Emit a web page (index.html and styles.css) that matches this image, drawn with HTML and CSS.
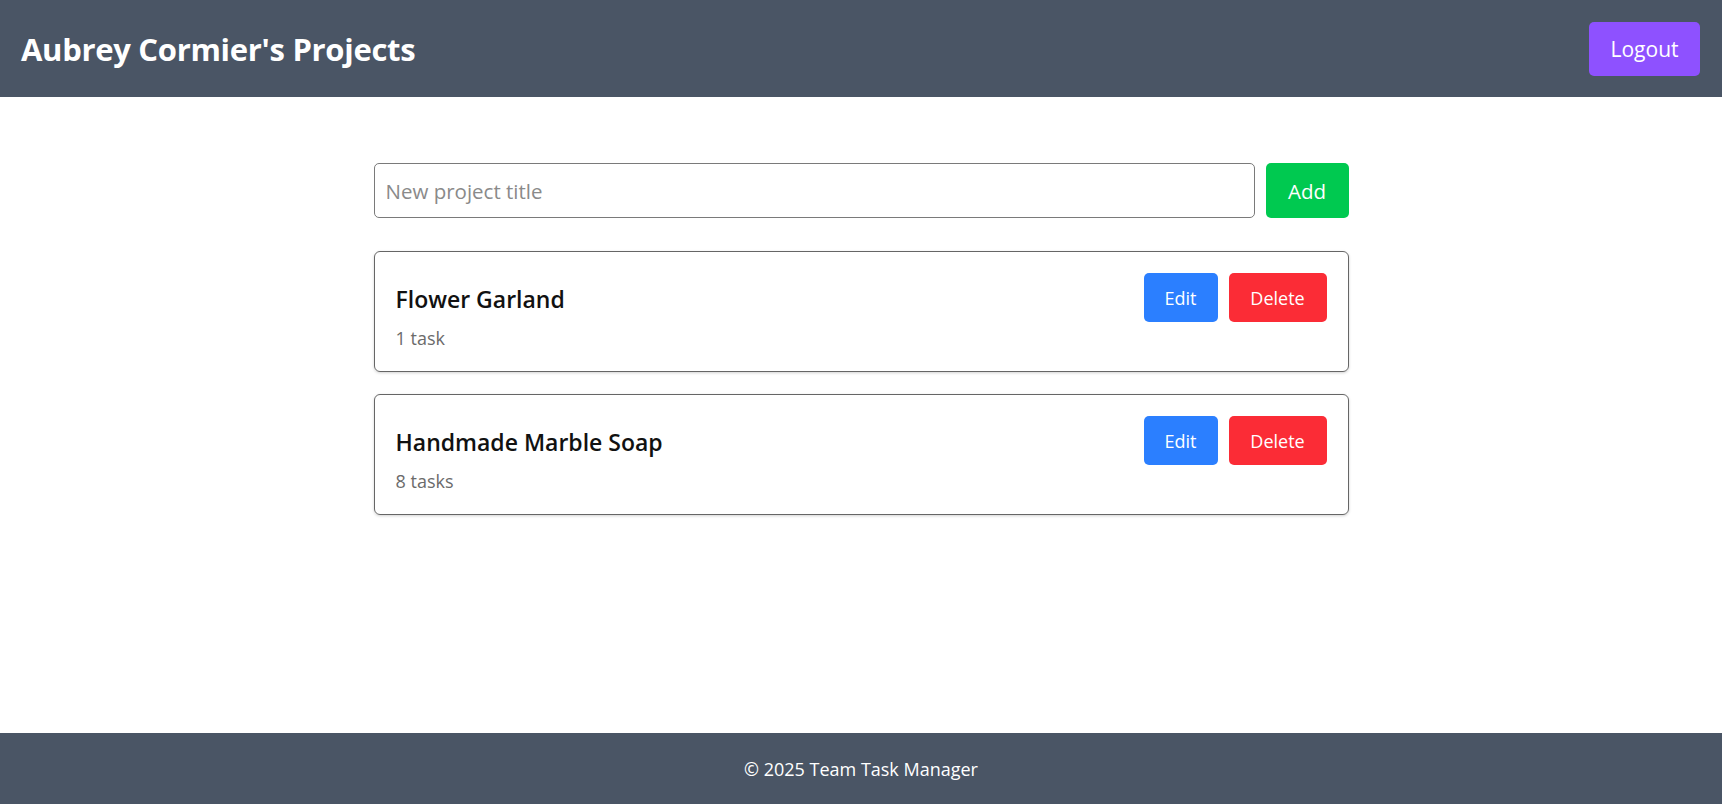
FILE: index.html
```html
<!DOCTYPE html>
<html lang="en">
<head>
<meta charset="utf-8">
<title>Projects</title>
<link rel="stylesheet" href="styles.css">
</head>
<body>
<div class="page">
  <header class="topbar">
    <h1 class="title">Aubrey Cormier's Projects</h1>
    <button class="btn btn-logout">Logout</button>
  </header>
  <main class="main">
    <div class="container">
      <form class="add-row">
        <input class="add-input" type="text" placeholder="New project title">
        <button type="button" class="btn btn-add">Add</button>
      </form>
      <ul class="list">
        <li class="card">
          <div class="card-info">
            <h2 class="card-title">Flower Garland</h2>
            <p class="card-meta">1 task</p>
          </div>
          <div class="card-actions">
            <button class="btn btn-edit">Edit</button>
            <button class="btn btn-delete">Delete</button>
          </div>
        </li>
        <li class="card">
          <div class="card-info">
            <h2 class="card-title">Handmade Marble Soap</h2>
            <p class="card-meta">8 tasks</p>
          </div>
          <div class="card-actions">
            <button class="btn btn-edit">Edit</button>
            <button class="btn btn-delete">Delete</button>
          </div>
        </li>
      </ul>
    </div>
  </main>
  <footer class="footer">© 2025 Team Task Manager</footer>
</div>
</body>
</html>
```

FILE: styles.css
```css
* { box-sizing: border-box; }
html, body { margin: 0; padding: 0; height: 100%; }
body {
  font-family: "Open Sans", "Noto Sans", sans-serif;
  color: #111;
  background: #fff;
}
.page {
  min-height: 100vh;
  display: flex;
  flex-direction: column;
}
.topbar {
  height: 97px;
  background: #4a5565;
  display: flex;
  align-items: center;
  justify-content: space-between;
  padding: 0 22px 0 21px;
}
.title {
  margin: 0;
  color: #fff;
  font-size: 31px;
  font-weight: 700;
  letter-spacing: -0.3px;
}
.btn {
  border: none;
  border-radius: 5px;
  color: #fff;
  font-family: inherit;
  cursor: pointer;
  display: inline-flex;
  align-items: center;
  justify-content: center;
}
.btn-logout {
  width: 111px;
  height: 54px;
  background: #8e51ff;
  font-size: 21px;
}
.main {
  flex: 1;
  padding-top: 66px;
}
.container {
  width: 975px;
  margin: 0 auto;
}
.add-row {
  display: flex;
  gap: 11px;
  margin: 0 0 33px;
}
.add-input {
  flex: 1;
  height: 55px;
  border: 1.5px solid #7a7a7a;
  border-radius: 5px;
  padding: 0 11px;
  font-family: inherit;
  font-size: 20.5px;
  color: #333;
}
.add-input::placeholder { color: #8a8a8a; }
.btn-add {
  width: 83px;
  height: 55px;
  background: #00c950;
  font-size: 20.5px;
}
.list {
  list-style: none;
  margin: 0;
  padding: 0;
  display: flex;
  flex-direction: column;
  gap: 22px;
}
.card {
  height: 121px;
  border: 1.5px solid #666;
  border-radius: 6px;
  box-shadow: 0 1px 3px rgba(0,0,0,0.18);
  padding: 21px 21px 0 21px;
  display: flex;
  justify-content: space-between;
  align-items: flex-start;
}
.card-info { padding-top: 10px; }
.card-title {
  margin: 0;
  font-size: 23px;
  font-weight: 600;
  line-height: 32px;
  color: #111;
}
.card-meta {
  margin: 11px 0 0;
  font-size: 18px;
  color: #6b6b6b;
  line-height: 24px;
}
.card-actions {
  display: flex;
  gap: 11px;
}
.btn-edit {
  width: 74px;
  height: 49px;
  background: #2b7fff;
  font-size: 18px;
}
.btn-delete {
  width: 98px;
  height: 49px;
  background: #fb2c36;
  font-size: 18px;
}
.footer {
  height: 71px;
  background: #4a5565;
  color: #fff;
  font-size: 18px;
  display: flex;
  align-items: center;
  justify-content: center;
}
```
